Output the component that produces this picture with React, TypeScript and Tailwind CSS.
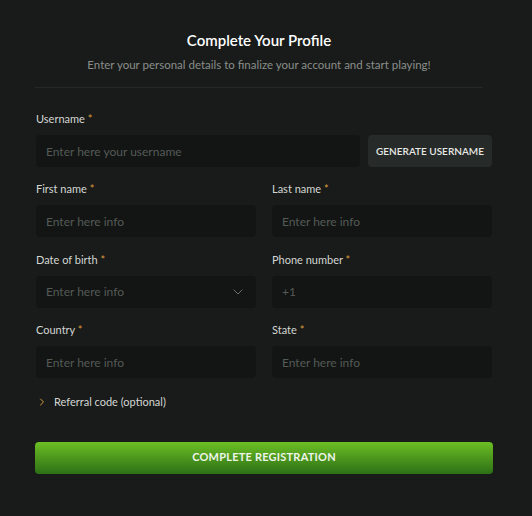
import { ChevronDown, ChevronRight } from "lucide-react";

function Label({ text }: { text: string }) {
  return (
    <label className="block text-[11px] leading-4 text-[#d4d6d4] mb-2">
      {text} <span className="text-[#d99a3c]">*</span>
    </label>
  );
}

function Field({
  label,
  placeholder = "Enter here info",
  select,
}: {
  label: string;
  placeholder?: string;
  select?: boolean;
}) {
  return (
    <div>
      <Label text={label} />
      <div className="relative">
        <input
          placeholder={placeholder}
          className="w-full h-8 rounded bg-[#121513] px-[10px] text-[12px] text-[#d4d6d4] placeholder:text-[#555a57] outline-none"
        />
        {select && (
          <ChevronDown
            className="absolute right-[10px] top-[8px] w-4 h-4 text-[#6a6f6c]"
            strokeWidth={1.5}
          />
        )}
      </div>
    </div>
  );
}

export default function App() {
  return (
    <div
      className="min-h-[516px] bg-[#181b19] pl-[36px] pr-[40px] pt-[30px]"
      style={{ fontFamily: "Lato, 'Open Sans', sans-serif" }}
    >
      <div className="-ml-px mr-[9px]">
        <div className="text-center">
          <h1 className="text-[15px] font-semibold text-white leading-5">Complete Your Profile</h1>
          <p className="mt-[7px] text-[11.5px] text-[#8a8e8b] leading-4">
            Enter your personal details to finalize your account and start playing!
          </p>
        </div>
        <div className="mt-[14px] h-px bg-[#242826]" />
      </div>

      <div className="mt-[23px]">
        <Label text="Username" />
        <div className="flex gap-2">
          <input
            placeholder="Enter here your username"
            className="flex-1 h-8 rounded bg-[#121513] px-[10px] text-[12px] text-[#d4d6d4] placeholder:text-[#555a57] outline-none"
          />
          <button className="w-[124px] h-8 rounded bg-[#262a28] text-[10px] font-semibold text-[#e6e8e6]">
            GENERATE USERNAME
          </button>
        </div>
      </div>

      <div className="mt-[14px] grid grid-cols-2 gap-x-4 gap-y-[14.5px]">
        <Field label="First name" />
        <Field label="Last name" />
        <Field label="Date of birth" select />
        <Field label="Phone number" placeholder="+1" />
        <Field label="Country" />
        <Field label="State" />
      </div>

      <div className="mt-[16px] flex items-center gap-[6px] text-[11px] text-[#d4d6d4]">
        <ChevronRight className="w-3 h-3 text-[#d99a3c]" strokeWidth={2} />
        <span>Referral code (optional)</span>
      </div>

      <button className="mt-[31px] -ml-px w-[458px] h-8 rounded bg-gradient-to-b from-[#6cc024] to-[#2d7016] text-[11px] font-bold tracking-[0.02em] text-[#eef5ea]">
        COMPLETE REGISTRATION
      </button>
    </div>
  );
}
